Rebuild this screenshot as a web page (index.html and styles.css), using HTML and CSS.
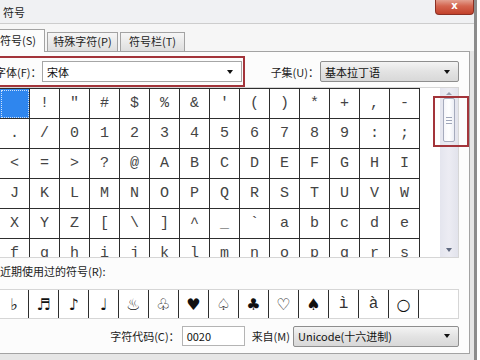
FILE: index.html
```html
<!DOCTYPE html>
<html lang="zh-CN">
<head>
<meta charset="utf-8">
<title>符号</title>
<link rel="stylesheet" href="styles.css">
</head>
<body>
<div class="dialog">
  <div class="titlebar">
    <span class="title">符号</span>
    <span class="close">x</span>
  </div>
  <div class="tabs">
    <span class="tab active">符号(S)</span>
    <span class="tab t2">特殊字符(P)</span>
    <span class="tab t3">符号栏(T)</span>
  </div>
  <div class="panel">
    <div class="fontrow">
      <span class="lbl lbl-font">字体(F)：</span>
      <div class="combo combo-font"><span>宋体</span><span class="arrow"></span></div>
      <span class="lbl lbl-sub">子集(U)：</span>
      <div class="combo combo-sub"><span>基本拉丁语</span><span class="arrow"></span></div>
    </div>
    <div class="charbox">
      <div class="grid">
        <span class="cell sel"></span><span class="cell">!</span><span class="cell">"</span><span class="cell">#</span><span class="cell">$</span><span class="cell">%</span><span class="cell">&amp;</span><span class="cell">'</span><span class="cell">(</span><span class="cell">)</span><span class="cell">*</span><span class="cell">+</span><span class="cell">,</span><span class="cell">-</span>
        <span class="cell">.</span><span class="cell">/</span><span class="cell">0</span><span class="cell">1</span><span class="cell">2</span><span class="cell">3</span><span class="cell">4</span><span class="cell">5</span><span class="cell">6</span><span class="cell">7</span><span class="cell">8</span><span class="cell">9</span><span class="cell">:</span><span class="cell">;</span>
        <span class="cell">&lt;</span><span class="cell">=</span><span class="cell">&gt;</span><span class="cell">?</span><span class="cell">@</span><span class="cell">A</span><span class="cell">B</span><span class="cell">C</span><span class="cell">D</span><span class="cell">E</span><span class="cell">F</span><span class="cell">G</span><span class="cell">H</span><span class="cell">I</span>
        <span class="cell">J</span><span class="cell">K</span><span class="cell">L</span><span class="cell">M</span><span class="cell">N</span><span class="cell">O</span><span class="cell">P</span><span class="cell">Q</span><span class="cell">R</span><span class="cell">S</span><span class="cell">T</span><span class="cell">U</span><span class="cell">V</span><span class="cell">W</span>
        <span class="cell">X</span><span class="cell">Y</span><span class="cell">Z</span><span class="cell">[</span><span class="cell">\</span><span class="cell">]</span><span class="cell">^</span><span class="cell">_</span><span class="cell">`</span><span class="cell">a</span><span class="cell">b</span><span class="cell">c</span><span class="cell">d</span><span class="cell">e</span>
        <span class="cell">f</span><span class="cell">g</span><span class="cell">h</span><span class="cell">i</span><span class="cell">j</span><span class="cell">k</span><span class="cell">l</span><span class="cell">m</span><span class="cell">n</span><span class="cell">o</span><span class="cell">p</span><span class="cell">q</span><span class="cell">r</span><span class="cell">s</span>
      </div>
      <div class="scrollbar">
        <span class="sarrow up"></span>
        <span class="thumb"><i></i><i></i><i></i></span>
        <span class="sarrow down"></span>
      </div>
    </div>
    <div class="recent-label">近期使用过的符号(R):</div>
    <div class="recent">
      <span class="rc">♭</span><span class="rc">♬</span><span class="rc">♪</span><span class="rc">♩</span><span class="rc bold">♨</span><span class="rc">♧</span><span class="rc">♥</span><span class="rc">♤</span><span class="rc">♣</span><span class="rc">♡</span><span class="rc">♠</span><span class="rc mono">ì</span><span class="rc mono">à</span><span class="rc">○</span>
    </div>
    <div class="coderow">
      <span class="lbl">字符代码(C)：</span>
      <span class="input">0020</span>
      <span class="lbl from">来自(M)</span>
      <div class="combo combo-from"><span>Unicode(十六进制)</span><span class="arrow"></span></div>
    </div>
  </div>
  <span class="mark mark-font"></span>
  <span class="mark mark-scroll"></span>
</div>
</body>
</html>
```

FILE: styles.css
```css
html, body {
  margin: 0;
  padding: 0;
}
body {
  width: 480px;
  height: 360px;
  overflow: hidden;
  background: #ffffff;
  font-family: "Noto Sans CJK SC", "Noto Sans", sans-serif;
  font-size: 11px;
  color: #1e1e1e;
}
.dialog {
  position: relative;
  margin-left: -10px;
  width: 487px;
  height: 360px;
  box-sizing: border-box;
  background: #e6e6e6;
  border-right: 3px solid #8c8c8c;
  display: flex;
  flex-direction: column;
}
.titlebar {
  height: 24px;
  box-sizing: border-box;
  background: #f0f1f3;
  border-bottom: 1px solid #cdcdcd;
  display: flex;
  align-items: flex-start;
  padding-left: 13px;
}
.title {
  line-height: 24px;
  font-size: 11px;
  color: #222;
}
.close {
  margin-left: auto;
  margin-top: -2px;
  width: 39px;
  height: 17px;
  box-sizing: border-box;
  border: 1px solid #8b3024;
  border-top: none;
  border-radius: 0 0 4px 4px;
  background: linear-gradient(#e8b3a5, #d4654f 50%, #c2412b);
  color: #fff;
  font-family: "DejaVu Sans", sans-serif;
  font-weight: bold;
  font-size: 10px;
  line-height: 15px;
  text-align: center;
}
.tabs {
  height: 27px;
  box-sizing: border-box;
  background: #f6f6f6;
  display: flex;
  align-items: flex-end;
  padding-left: 4px;
  position: relative;
  z-index: 1;
}
.tab {
  box-sizing: border-box;
  border: 1px solid #a3a3a3;
  border-bottom: none;
  height: 19px;
  line-height: 17px;
  margin-right: 2px;
  background: linear-gradient(#f6f6f6, #dedede);
  text-align: center;
  font-size: 11px;
  color: #222;
}
.tab.active {
  width: 51px;
  height: 23px;
  line-height: 21px;
  margin-bottom: -1px;
  background: #fcfcfc;
  text-align: left;
  padding-left: 5px;
}
.tab.t2 { width: 71px; }
.tab.t3 { width: 65px; }
.panel {
  margin-left: 4px;
  width: 476px;
  height: 303px;
  box-sizing: border-box;
  border: 1px solid #a3a3a3;
  background: #fcfcfc;
  display: flex;
  flex-direction: column;
}
.fontrow {
  margin-top: 9px;
  height: 21px;
  display: flex;
  align-items: center;
  padding-right: 10px;
}
.lbl {
  white-space: nowrap;
  font-size: 11px;
  color: #222;
}
.lbl-font {
  width: 46px;
  text-align: right;
  margin-right: 1px;
}
.lbl-sub {
  margin-left: auto;
  margin-right: 1px;
}
.combo {
  height: 21px;
  box-sizing: border-box;
  border: 1px solid #a6a6a6;
  display: flex;
  align-items: center;
  justify-content: space-between;
  padding: 0 8px 0 4px;
  font-size: 11px;
  color: #111;
}
.combo-font {
  width: 200px;
  background: #ffffff;
}
.combo-sub, .combo-from {
  background: linear-gradient(#f4f4f4, #e3e3e3 50%, #d8d8d8);
  border-color: #8e8e8e;
  border-radius: 2px;
}
.combo-sub { width: 139px; }
.combo-from { width: 166px; }
.arrow {
  width: 0;
  height: 0;
  border-left: 3.5px solid transparent;
  border-right: 3.5px solid transparent;
  border-top: 4px solid #111;
}
.charbox {
  margin-top: 5px;
  margin-right: 10px;
  height: 171px;
  box-sizing: border-box;
  border: 1px solid #d6d6d6;
  border-left: none;
  background: #ffffff;
  display: flex;
  justify-content: space-between;
}
.grid {
  margin-left: 4px;
  width: 421px;
  height: 169px;
  overflow: hidden;
  display: grid;
  grid-template-columns: repeat(14, 30px);
  grid-auto-rows: 30px;
  border-left: 1px solid #2e2e2e;
  border-top: 1px solid #2e2e2e;
  box-sizing: border-box;
  align-content: start;
}
.cell {
  box-sizing: border-box;
  border-right: 1.5px solid #2e2e2e;
  border-bottom: 1.5px solid #2e2e2e;
  font-family: "Liberation Mono", "DejaVu Sans Mono", monospace;
  font-size: 15px;
  color: #444;
  display: flex;
  align-items: center;
  justify-content: center;
}
.cell.sel {
  background: #2f86ee;
  outline: 1px dotted #cfe2fb;
  outline-offset: -2px;
}
.scrollbar {
  width: 18px;
  background: linear-gradient(90deg, #e4e5ee, #ececf3 50%, #e2e3ec);
  display: flex;
  flex-direction: column;
  align-items: center;
}
.sarrow {
  width: 0;
  height: 0;
  border-left: 3px solid transparent;
  border-right: 3px solid transparent;
}
.sarrow.up {
  margin-top: 4px;
  border-bottom: 3px solid #9aa0b0;
}
.sarrow.down {
  margin-top: auto;
  margin-bottom: 5px;
  border-top: 4px solid #606a80;
}
.thumb {
  margin-top: 3px;
  width: 12px;
  height: 44px;
  box-sizing: border-box;
  border: 1px solid #a6abbd;
  border-radius: 2px;
  background: linear-gradient(90deg, #f6f6fa, #ffffff 50%, #eceef5);
  display: flex;
  flex-direction: column;
  align-items: center;
  justify-content: center;
  gap: 2px;
}
.thumb i {
  display: block;
  width: 6px;
  height: 1px;
  background: #9fa6ba;
}
.recent-label {
  margin-top: 5px;
  height: 16px;
  line-height: 16px;
  padding-left: 5px;
  font-size: 11px;
  color: #222;
}
.recent {
  margin-top: 10px;
  margin-right: 10px;
  height: 30px;
  box-sizing: border-box;
  border: 1px solid #d6d6d6;
  border-left: none;
  background: #ffffff;
  display: flex;
  padding-left: 4px;
}
.rc {
  width: 30px;
  box-sizing: border-box;
  border-right: 1.5px solid #2e2e2e;
  font-family: "DejaVu Sans", sans-serif;
  font-size: 16px;
  color: #111;
  display: flex;
  align-items: center;
  justify-content: center;
}
.rc:first-child {
  border-left: 1.5px solid #2e2e2e;
}
.rc.bold {
  font-weight: bold;
}
.rc.mono {
  font-family: "Liberation Mono", monospace;
  color: #333;
}
.coderow {
  margin-top: 7px;
  height: 20px;
  display: flex;
  align-items: center;
  justify-content: flex-end;
  padding-right: 10px;
}
.input {
  margin-left: 2px;
  width: 63px;
  height: 20px;
  box-sizing: border-box;
  border: 1px solid #b4b4b4;
  background: #ffffff;
  padding-left: 4px;
  line-height: 18px;
  font-size: 11px;
  color: #111;
}
.lbl.from {
  margin-left: 7px;
  margin-right: 3px;
}
.mark {
  position: absolute;
  border: 2px solid #a3343a;
  box-sizing: border-box;
  z-index: 2;
}
.mark-font {
  left: 6px;
  top: 56px;
  width: 249px;
  height: 31px;
}
.mark-scroll {
  left: 443px;
  top: 96px;
  width: 36px;
  height: 51px;
}
```
